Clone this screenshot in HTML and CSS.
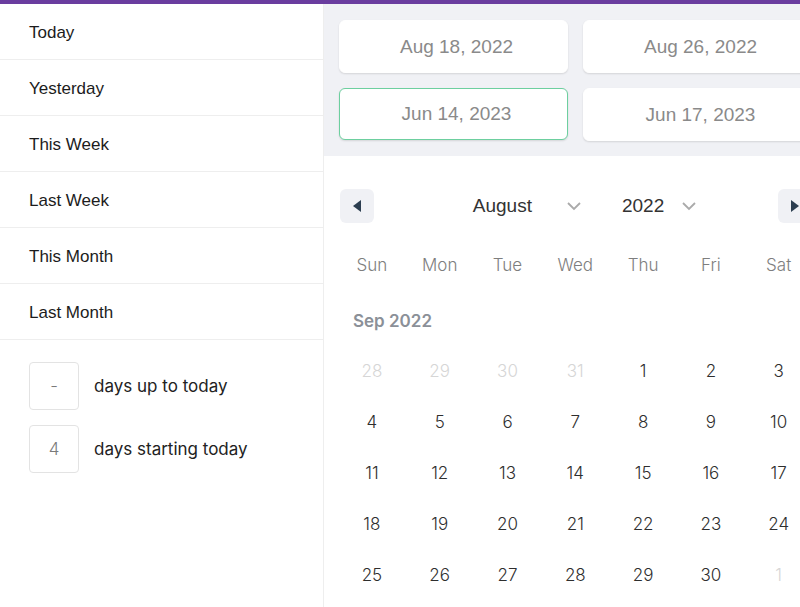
FILE: index.html
```html
<!DOCTYPE html>
<html lang="en">
<head>
<meta charset="utf-8">
<title>Date Range Picker</title>
<link rel="stylesheet" href="styles.css">
</head>
<body>
<div class="topbar"></div>
<div class="main">
  <aside class="sidebar">
    <div class="preset">Today</div>
    <div class="preset">Yesterday</div>
    <div class="preset">This Week</div>
    <div class="preset">Last Week</div>
    <div class="preset">This Month</div>
    <div class="preset">Last Month</div>
    <div class="custom">
      <div class="custom-row"><div class="num-box">-</div><span class="custom-label">days up to today</span></div>
      <div class="custom-row"><div class="num-box">4</div><span class="custom-label">days starting today</span></div>
    </div>
  </aside>
  <section class="panel">
    <div class="ranges">
      <div class="date-box">Aug 18, 2022</div>
      <div class="date-box">Aug 26, 2022</div>
      <div class="date-box active">Jun 14, 2023</div>
      <div class="date-box">Jun 17, 2023</div>
    </div>
    <div class="calendar">
      <div class="cal-header">
        <div class="nav-btn"><svg width="10" height="14" viewBox="0 0 10 14"><path d="M9 1 L1 7 L9 13 Z" fill="#2c3e50"/></svg></div>
        <div class="selects">
          <div class="select month"><span>August</span><svg width="16" height="10" viewBox="0 0 16 10"><path d="M2 2 L8 8 L14 2" fill="none" stroke="#aaaaaa" stroke-width="1.8"/></svg></div>
          <div class="select year"><span>2022</span><svg width="16" height="10" viewBox="0 0 16 10"><path d="M2 2 L8 8 L14 2" fill="none" stroke="#aaaaaa" stroke-width="1.8"/></svg></div>
        </div>
        <div class="nav-btn"><svg width="10" height="14" viewBox="0 0 10 14"><path d="M1 1 L9 7 L1 13 Z" fill="#2c3e50"/></svg></div>
      </div>
      <div class="week">
        <div>Sun</div><div>Mon</div><div>Tue</div><div>Wed</div><div>Thu</div><div>Fri</div><div>Sat</div>
      </div>
      <div class="month-label">Sep 2022</div>
      <div class="days">
        <div class="muted">28</div><div class="muted">29</div><div class="muted">30</div><div class="muted">31</div><div>1</div><div>2</div><div>3</div>
        <div>4</div><div>5</div><div>6</div><div>7</div><div>8</div><div>9</div><div>10</div>
        <div>11</div><div>12</div><div>13</div><div>14</div><div>15</div><div>16</div><div>17</div>
        <div>18</div><div>19</div><div>20</div><div>21</div><div>22</div><div>23</div><div>24</div>
        <div>25</div><div>26</div><div>27</div><div>28</div><div>29</div><div>30</div><div class="muted">1</div>
      </div>
    </div>
  </section>
</div>
</body>
</html>
```
FILE: styles.css
```css
html, body {
  margin: 0;
  padding: 0;
  background: #ffffff;
  overflow: hidden;
}
body {
  width: 800px;
  height: 607px;
  font-family: "Liberation Sans", Arial, sans-serif;
}
.topbar {
  height: 4px;
  background: #6a3d9f;
}
.main {
  display: flex;
  width: 830px;
}
.sidebar {
  width: 324px;
  flex: none;
  border-right: 1px solid #eeeeee;
  height: 603px;
  box-sizing: border-box;
}
.preset {
  height: 52px;
  padding-top: 3px;
  border-bottom: 1px solid #eeeeee;
  display: flex;
  align-items: center;
  padding-left: 29px;
  font-size: 17px;
  color: #1c1c1c;
}
.custom {
  padding: 22px 0 0 29px;
  display: flex;
  flex-direction: column;
  gap: 15px;
}
.custom-row {
  display: flex;
  align-items: center;
  gap: 15px;
}
.num-box {
  width: 50px;
  height: 48px;
  box-sizing: border-box;
  border: 1px solid #e3e3e3;
  border-radius: 4px;
  display: flex;
  align-items: center;
  justify-content: center;
  font-family: Inter, "Liberation Sans", sans-serif;
  font-size: 17px;
  font-weight: 300;
  color: #7a7a7a;
}
.custom-label {
  font-family: Inter, "Liberation Sans", sans-serif;
  font-size: 17px;
  color: #222222;
}
.panel {
  width: 503px;
  flex: none;
}
.ranges {
  background: #f0f1f5;
  padding: 16px 15px 15px 15px;
  display: grid;
  grid-template-columns: 229px 229px;
  gap: 15px;
}
.date-box {
  height: 53px;
  box-sizing: border-box;
  padding-left: 6px;
  background: #ffffff;
  border: 1px solid #ffffff;
  border-radius: 6px;
  box-shadow: 0 1px 2px rgba(0, 0, 0, 0.12);
  display: flex;
  align-items: center;
  justify-content: center;
  font-size: 19px;
  color: #8a8a8a;
}
.date-box.active {
  border: 1.5px solid #6dcf9f;
  height: 52px;
}
.calendar {
  padding: 33px 14px 0 14px;
}
.cal-header {
  display: flex;
  align-items: center;
  padding: 0 1px 0 2px;
}
.nav-btn {
  width: 34px;
  height: 34px;
  background: #f0f1f5;
  border-radius: 6px;
  display: flex;
  align-items: center;
  justify-content: center;
  flex: none;
}
.selects {
  flex: 1;
  display: flex;
  justify-content: center;
  gap: 40px;
  padding-left: 18px;
}
.select {
  display: flex;
  align-items: center;
  font-size: 19px;
  color: #333333;
}
.select.month span {
  margin-right: 34px;
}
.select.year span {
  margin-right: 17px;
}
.week, .days {
  display: grid;
  grid-template-columns: repeat(7, 67.8px);
}
.week {
  margin-top: 17px;
}
.week div {
  height: 50px;
  display: flex;
  align-items: center;
  justify-content: center;
  font-family: Inter, "Liberation Sans", sans-serif;
  font-size: 17px;
  font-weight: 300;
  color: #7e7e7e;
}
.month-label {
  height: 49px;
  padding-top: 6px;
  padding-left: 15px;
  display: flex;
  align-items: center;
  font-family: Inter, "Liberation Sans", sans-serif;
  font-size: 17px;
  font-weight: 600;
  color: #8b9098;
}
.days div {
  height: 51.2px;
  display: flex;
  align-items: center;
  justify-content: center;
  font-family: Inter, "Liberation Sans", sans-serif;
  font-size: 17px;
  font-weight: 300;
  color: #2e2e2e;
}
.days div.muted {
  color: #d6d6d6;
}
```
